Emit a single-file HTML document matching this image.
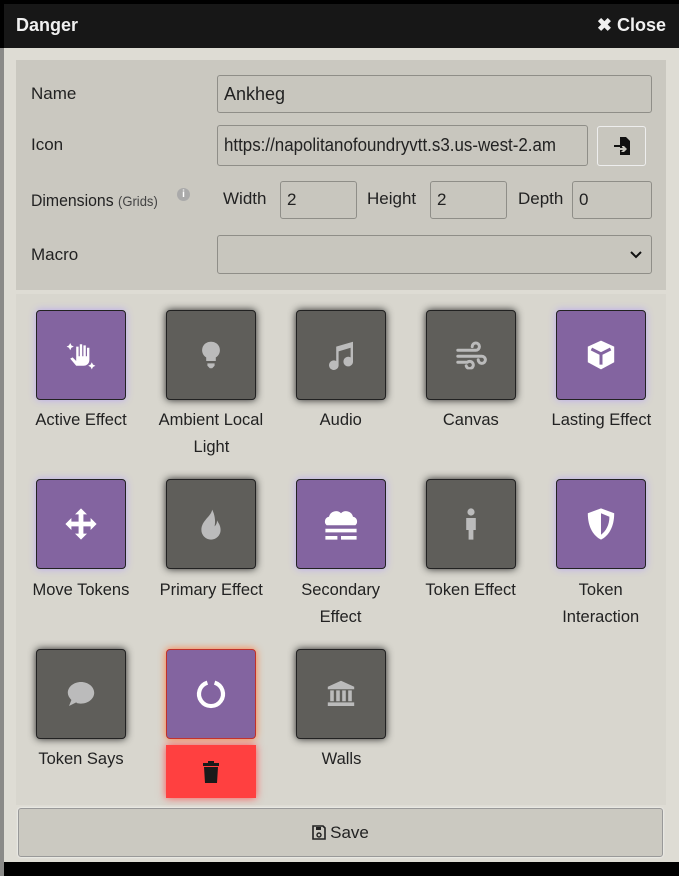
<!DOCTYPE html>
<html><head><style>
*{box-sizing:border-box;margin:0;padding:0}
body{width:679px;height:876px;background:#000;position:relative;overflow:hidden;font-family:"Liberation Sans",sans-serif;color:#222}
.a{position:absolute}
.c{display:inline-block;white-space:nowrap}
.cc{display:inline-block;transform:scaleX(.97);white-space:nowrap}
.hdr{left:4px;top:4px;width:675px;height:44px;background:#171717;color:#f0f0f0;font-size:18px}
.body{left:4px;top:48px;width:675px;height:814px;background:#dedcd4}
.strip{left:0;top:48px;width:4px;height:828px;background:#8a8a88}
.form{left:16px;top:60px;width:650px;height:230px;background:#cac8c0}
.lbl{font-size:17px;color:#222}
.inp{background:#c8c6be;border:1px solid #8f8e88;border-radius:3px;font-size:17px;padding-left:6px;display:flex;align-items:center;color:#222;overflow:hidden;white-space:nowrap}
.tile{width:90px;height:90px;border:1px solid #222;border-radius:4px;display:flex;align-items:center;justify-content:center}
.tile svg{transform:scale(1.2)}
.p{background:#8364a0;box-shadow:0 0 8px #b8a8f0}
.g{background:#5f5e5a;box-shadow:0 0 8px #222}
.t{width:130px;text-align:center;font-size:17px;line-height:27px;color:#222}
</style></head><body>
<div class="a strip"></div>
<div class="a hdr"><span class="a c" style="left:12px;top:11px;font-weight:bold">Danger</span><span class="a" style="right:13px;top:11px;font-weight:bold">✖ Close</span></div>
<div class="a body"></div>
<div class="a form"></div>
<div class="a lbl" style="left:31px;top:84px">Name</div>
<div class="a lbl" style="left:31px;top:135px">Icon</div>
<div class="a lbl" style="left:31px;top:191px"><span class="c" style="transform:scaleX(.93);transform-origin:left">Dimensions <span style="font-size:14px;color:#444">(Grids)</span></span></div>
<div class="a" style="left:177px;top:188px;width:13px;height:13px;border-radius:50%;background:#aaa;color:#fff;font-size:10px;text-align:center;line-height:13px;font-weight:bold">i</div>
<div class="a lbl" style="left:31px;top:245px">Macro</div>
<div class="a inp" style="left:217px;top:75px;width:435px;height:38px;font-size:18px">Ankheg</div>
<div class="a inp" style="left:217px;top:125px;width:371px;height:41px;font-size:18px"><span style="display:inline-block;transform:scaleX(.94);transform-origin:left">https://napolitanofoundryvtt.s3.us-west-2.am</span></div>
<div class="a" style="left:597px;top:126px;width:49px;height:40px;background:#c8c6be;border:1px solid #eee;border-radius:3px;display:flex;align-items:center;justify-content:center">
<svg width="18" height="20" viewBox="0 0 18 20"><path d="M7 1h6l4 4v14H7v-5h3l-2 2h3l3-3-3-3H8l2 2H7z" fill="#111"/><path d="M1 9h8v2H1z" fill="#111"/></svg></div>
<div class="a lbl" style="left:223px;top:189px">Width</div>
<div class="a inp" style="left:280px;top:181px;width:77px;height:38px">2</div>
<div class="a lbl" style="left:367px;top:189px">Height</div>
<div class="a inp" style="left:430px;top:181px;width:77px;height:38px">2</div>
<div class="a lbl" style="left:518px;top:189px">Depth</div>
<div class="a inp" style="left:572px;top:181px;width:80px;height:38px">0</div>
<div class="a inp" style="left:217px;top:235px;width:435px;height:39px"><svg class="a" style="right:8px;top:14px" width="14" height="9" viewBox="0 0 14 9"><path d="M2 2l5 5 5-5" fill="none" stroke="#111" stroke-width="2"/></svg></div>
<div class="a" style="left:16px;top:294px;width:650px;height:511px;background:#d8d6ce"></div>

<div class="a tile p" style="left:36px;top:310px"><svg width="26" height="26" viewBox="0 0 26 26"><path d="M9 22l-5-6 2-1 3 3V6h2v8h1V4h2v10h1V5h2v9h1V7h2v10c0 3-2 5-5 5z" fill="#fff"/><path d="M4 3l1 2 2 1-2 1-1 2-1-2-2-1 2-1zM22 19l1 2 2 1-2 1-1 2-1-2-2-1 2-1z" fill="#fff"/></svg></div>
<div class="a tile g" style="left:166px;top:310px"><svg width="20" height="26" viewBox="0 0 20 26"><path d="M10 2a7 7 0 0 0-4 13v3h8v-3a7 7 0 0 0-4-13zM7 20h6v2l-2 2H9l-2-2z" fill="#bbb"/></svg></div>
<div class="a tile g" style="left:296px;top:310px"><svg width="24" height="26" viewBox="0 0 24 26"><path d="M22 2L8 6v12a4 4 0 1 0 2 3V10l10-3v8a4 4 0 1 0 2 3z" fill="#bbb"/></svg></div>
<div class="a tile g" style="left:426px;top:310px"><svg width="28" height="24" viewBox="0 0 28 24" fill="none" stroke="#bbb" stroke-width="2.5" stroke-linecap="round"><path d="M3 8h15a3 3 0 1 0-3-3M3 13h20a3 3 0 1 1-3 3M3 18h8a3 3 0 1 1-1 3"/></svg></div>
<div class="a tile p" style="left:556px;top:310px"><svg width="26" height="28" viewBox="0 0 26 28"><path d="M13 2l11 5v13l-11 6-11-6V7z" fill="#fff"/><path d="M5 9l8 4 8-4M13 13v9" stroke="#8364a0" stroke-width="2.5" fill="none"/></svg></div>
<div class="a t" style="left:16px;top:406px"><span class="cc">Active Effect</span></div>
<div class="a t" style="left:146px;top:406px"><span class="cc">Ambient Local</span><br><span class="cc">Light</span></div>
<div class="a t" style="left:276px;top:406px"><span class="cc">Audio</span></div>
<div class="a t" style="left:406px;top:406px"><span class="cc">Canvas</span></div>
<div class="a t" style="left:536px;top:406px"><span class="cc">Lasting Effect</span></div>

<div class="a tile p" style="left:36px;top:479px"><svg width="28" height="28" viewBox="0 0 28 28"><path d="M14 1l5 5h-3v6h6V9l5 5-5 5v-3h-6v6h3l-5 5-5-5h3v-6H6v3l-5-5 5-5v3h6V6H9z" fill="#fff"/></svg></div>
<div class="a tile g" style="left:166px;top:479px"><svg width="20" height="28" viewBox="0 0 20 28"><path d="M11 2c-1 6-9 9-9 17a8 8 0 0 0 16 0c0-4-2-6-3-8 0 3-1 4-2 5 1-5 0-10-2-14z" fill="#bbb"/></svg></div>
<div class="a tile p" style="left:296px;top:479px"><svg width="32" height="28" viewBox="0 0 32 28"><path d="M4 15a4 4 0 0 1 2-7 6 6 0 0 1 10-3 6 6 0 0 1 10 3 4 4 0 0 1 2 7z" fill="#fff"/><path d="M3 18h26v3H3zM3 24h10v3H3zM16 24h13v3H16z" fill="#fff"/></svg></div>
<div class="a tile g" style="left:426px;top:479px"><svg width="12" height="28" viewBox="0 0 12 28"><circle cx="6" cy="4" r="3" fill="#bbb"/><path d="M2 9h8v10H8v8H4v-8H2z" fill="#bbb"/></svg></div>
<div class="a tile p" style="left:556px;top:479px"><svg width="24" height="28" viewBox="0 0 24 28"><path d="M12 1l11 4c0 12-5 19-11 22C6 24 1 17 1 5z" fill="#fff"/><path d="M12 5v18c4-3 7-8 7-15z" fill="#8364a0"/></svg></div>
<div class="a t" style="left:16px;top:576px"><span class="cc">Move Tokens</span></div>
<div class="a t" style="left:146px;top:576px"><span class="cc">Primary Effect</span></div>
<div class="a t" style="left:276px;top:576px"><span class="cc">Secondary</span><br><span class="cc">Effect</span></div>
<div class="a t" style="left:406px;top:576px"><span class="cc">Token Effect</span></div>
<div class="a t" style="left:536px;top:576px"><span class="cc">Token</span><br><span class="cc">Interaction</span></div>

<div class="a tile g" style="left:36px;top:649px"><svg width="26" height="26" viewBox="0 0 26 26"><path d="M13 3c6 0 11 4 11 9s-5 9-11 9c-2 0-3 0-4-1l-6 3 2-5c-2-2-3-4-3-6 0-5 5-9 11-9z" fill="#bbb"/></svg></div>
<div class="a tile p" style="left:166px;top:649px;border-color:#c0302a;box-shadow:0 0 8px #ff7a3a"><svg width="28" height="28" viewBox="0 0 28 28"><path d="M11 4.5A10 10 0 1 0 17 4.5" fill="none" stroke="#fff" stroke-width="3.5"/></svg></div>
<div class="a" style="left:166px;top:745px;width:90px;height:53px;background:#ff4040;box-shadow:0 0 8px #ff5050;display:flex;align-items:center;justify-content:center"><svg width="18" height="24" viewBox="0 0 18 24"><path d="M6 1h6v2h5v3H1V3h5zM2 7h14l-1 16H3z" fill="#1a1a1a"/></svg></div>
<div class="a tile g" style="left:296px;top:649px"><svg width="26" height="26" viewBox="0 0 26 26"><path d="M13 2l11 5v2H2V7zM4 10h3v9H4zM9 10h3v9H9zM14 10h3v9h-3zM19 10h3v9h-3zM2 20h22v3H2z" fill="#bbb"/></svg></div>
<div class="a t" style="left:16px;top:745px"><span class="cc">Token Says</span></div>
<div class="a t" style="left:276px;top:745px"><span class="cc">Walls</span></div>
<div class="a" style="left:18px;top:808px;width:645px;height:49px;background:#cbc9c1;border:1px solid #999;border-radius:3px;box-shadow:0 0 2px #fff;display:flex;align-items:center;justify-content:center;font-size:17px"><svg width="14" height="15" viewBox="0 0 14 15" style="margin-right:4px"><path d="M1 1h10l2 2v11H1z" fill="none" stroke="#222" stroke-width="1.6"/><path d="M4 2h5v3H4z" fill="#222"/><circle cx="7" cy="10" r="2" fill="none" stroke="#222" stroke-width="1.4"/></svg>Save</div>
</body></html>
